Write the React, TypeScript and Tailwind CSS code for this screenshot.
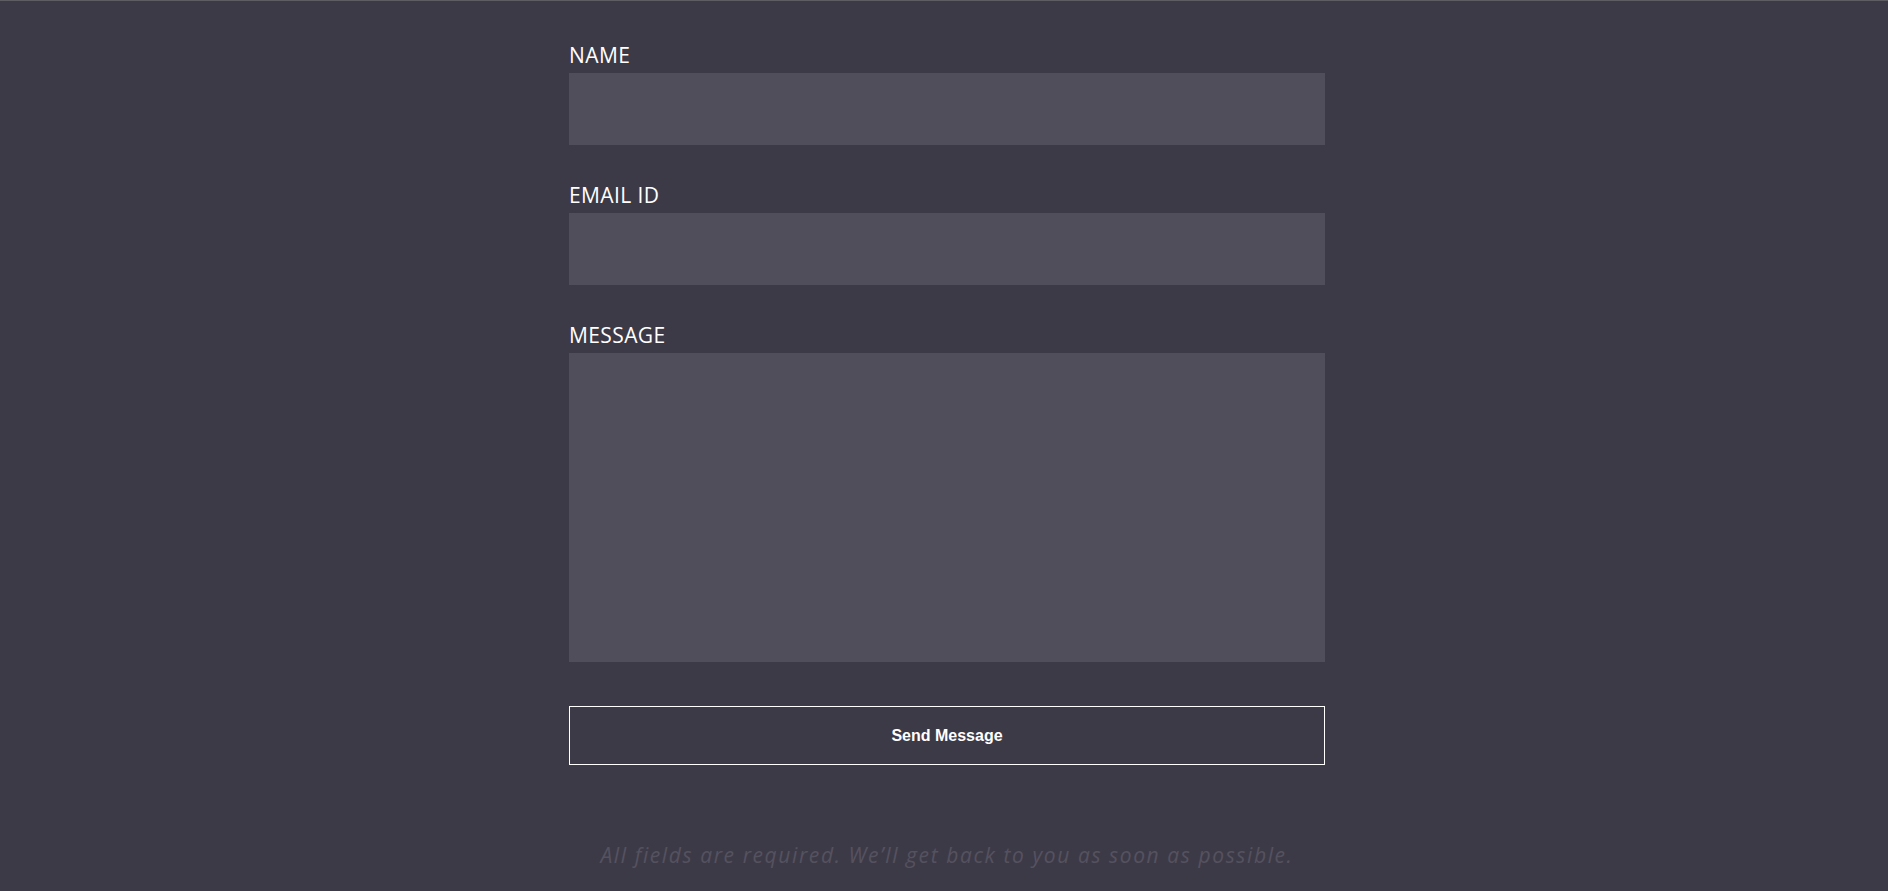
const fields = [
  { id: 'name', label: 'NAME', tall: false },
  { id: 'email', label: 'EMAIL ID', tall: false },
  { id: 'message', label: 'MESSAGE', tall: true },
];

export default function App() {
  return (
    <div className="min-h-screen bg-[#3d3a48] border-t border-[#5e5d63] flex justify-center pl-[6px]">
      <form className="w-[756px] pt-[40px]" onSubmit={(e) => e.preventDefault()}>
        {fields.map((f) => (
          <div key={f.id} className={f.tall ? 'mb-[44px]' : 'mb-[36px]'}>
            <label
              htmlFor={f.id}
              className="block text-white text-[21px] tracking-[0.4px] leading-[28px] mb-[4px]"
              style={{ fontFamily: '"Open Sans", sans-serif' }}
            >
              {f.label}
            </label>
            {f.tall ? (
              <textarea id={f.id} className="block w-full h-[309px] bg-[#504e5b] outline-none resize-none text-white p-3" />
            ) : (
              <input id={f.id} className="block w-full h-[72px] bg-[#504e5b] outline-none text-white px-3" />
            )}
          </div>
        ))}

        <button
          type="submit"
          className="w-full h-[59px] border border-white text-white text-[16px] font-bold"
          style={{ fontFamily: '"Liberation Sans", Arial, sans-serif' }}
        >
          Send Message
        </button>

        <p
          className="mt-[74px] text-center italic text-[21px] tracking-[1.6px] leading-[32px] text-[#55525f]"
          style={{ fontFamily: '"Open Sans", sans-serif' }}
        >
          All fields are required. We’ll get back to you as soon as possible.
        </p>
      </form>
    </div>
  );
}
